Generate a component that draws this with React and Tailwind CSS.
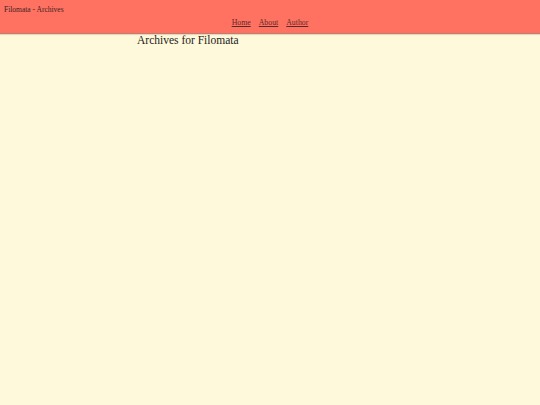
export default function App() {
  return (
    <div className="min-h-screen bg-[#fff9db] font-['Liberation_Serif',serif] text-[#222]">
      <header className="h-[34px] bg-[#ff7261] border-b border-[#c47a6c] shadow-[0_1px_1px_rgba(0,0,0,0.12)] px-[4px] pt-[5px]">
        <div className="text-[7.5px] leading-[10px] text-[#3a2222]">Filomata - Archives</div>
        <nav className="flex justify-center gap-[8px] mt-[3px] ml-[0px] text-[7.8px] leading-[10px]">
          <a href="#" className="underline text-[#5a2a2a]">Home</a>
          <a href="#" className="underline text-[#5a2a2a]">About</a>
          <a href="#" className="underline text-[#5a2a2a]">Author</a>
        </nav>
      </header>
      <main className="pl-[137px]">
        <h1 className="text-[11.5px] leading-[12px]">Archives for Filomata</h1>
      </main>
    </div>
  );
}
